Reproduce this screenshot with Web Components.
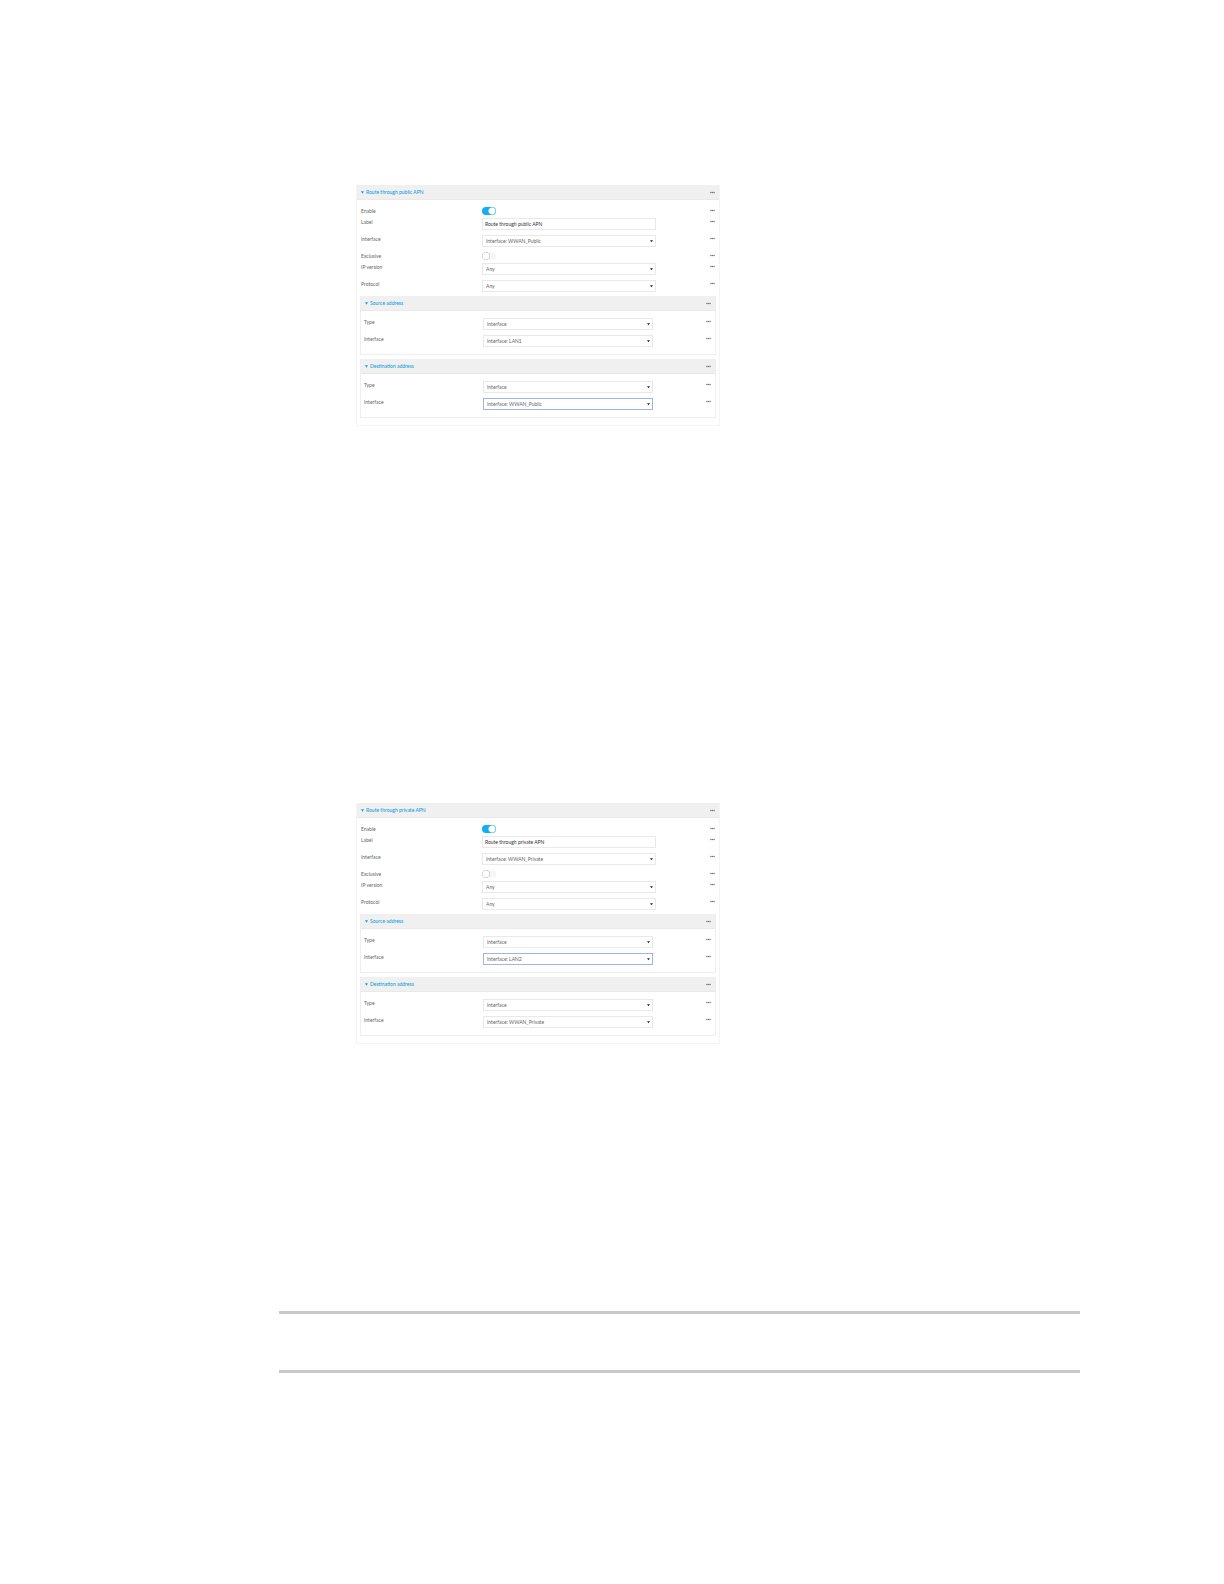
<!DOCTYPE html>
<html lang="en">
<head>
<meta charset="utf-8">
<title>Policy routes</title>
<style>
  body {
    margin: 0;
    background: #fff;
    color: #666;
    font-family: Lato, "Open Sans", sans-serif;
    font-size: 5px;
    line-height: 8px;
  }
</style>
</head>
<body>
<doc-page>
  <route-panel heading="Route through public APN">
    <field-row kind="toggle" label="Enable" checked></field-row>
    <field-row kind="text" label="Label" value="Route through public APN"></field-row>
    <field-row kind="select" label="Interface" value="Interface: WWAN_Public"></field-row>
    <field-row kind="toggle" label="Exclusive"></field-row>
    <field-row kind="select" label="IP version" value="Any"></field-row>
    <field-row kind="select" label="Protocol" value="Any"></field-row>
    <address-section heading="Source address">
      <field-row kind="select" label="Type" value="Interface"></field-row>
      <field-row kind="select" label="Interface" value="Interface: LAN1"></field-row>
    </address-section>
    <address-section heading="Destination address">
      <field-row kind="select" label="Type" value="Interface"></field-row>
      <field-row kind="select" label="Interface" value="Interface: WWAN_Public" active></field-row>
    </address-section>
  </route-panel>

  <route-panel heading="Route through private APN">
    <field-row kind="toggle" label="Enable" checked></field-row>
    <field-row kind="text" label="Label" value="Route through private APN"></field-row>
    <field-row kind="select" label="Interface" value="Interface: WWAN_Private"></field-row>
    <field-row kind="toggle" label="Exclusive"></field-row>
    <field-row kind="select" label="IP version" value="Any"></field-row>
    <field-row kind="select" label="Protocol" value="Any"></field-row>
    <address-section heading="Source address">
      <field-row kind="select" label="Type" value="Interface"></field-row>
      <field-row kind="select" label="Interface" value="Interface: LAN2" active></field-row>
    </address-section>
    <address-section heading="Destination address">
      <field-row kind="select" label="Type" value="Interface"></field-row>
      <field-row kind="select" label="Interface" value="Interface: WWAN_Private"></field-row>
    </address-section>
  </route-panel>

  <doc-note slot="note"></doc-note>
</doc-page>

<script>
class DocPage extends HTMLElement {
  constructor() {
    super();
    this.attachShadow({ mode: 'open' });
    this.shadowRoot.innerHTML = `
      <style>
        :host {
          display: block;
          padding: 185px 144px 211px 279px;
        }

        .panels {
          display: flex;
          flex-direction: column;
          gap: 377px;
          max-width: 364px;
          margin-left: 77px;
        }

        .note {
          margin-top: 267px;
        }
      </style>
      <main>
        <div class="panels"><slot></slot></div>
        <div class="note"><slot name="note"></slot></div>
      </main>
    `;
  }
}

// Empty note area between two rules
class DocNote extends HTMLElement {
  constructor() {
    super();
    this.attachShadow({ mode: 'open' });
    this.shadowRoot.innerHTML = `
      <style>
        :host {
          display: block;
          min-height: 56px;
          border-top: 3px solid #c8c8c8;
          border-bottom: 3px solid #c8c8c8;
        }
      </style>
      <slot></slot>
    `;
  }
}

class MoreButton extends HTMLElement {
  constructor() {
    super();
    this.attachShadow({ mode: 'open' });
    this.shadowRoot.innerHTML = `
      <style>
        :host {
          display: block;
        }

        button {
          display: block;
          padding: 0;
          border: 0;
          background: none;
          cursor: pointer;
        }

        svg {
          display: block;
          width: 5px;
          height: 7px;
          fill: #777;
        }
      </style>
      <button type="button" aria-label="More options">
        <svg viewBox="0 0 5 7" aria-hidden="true">
          <circle cx="0.9" cy="3.5" r="0.8"/>
          <circle cx="2.5" cy="3.5" r="0.8"/>
          <circle cx="4.1" cy="3.5" r="0.8"/>
        </svg>
      </button>
    `;
  }
}

const headerStyle = `
  header {
    display: flex;
    align-items: center;
    justify-content: space-between;
    box-sizing: border-box;
    height: 15px;
    padding: 0 4px;
    background: #f0f0f0;
    border-bottom: 1px solid #e9e9e9;
  }

  h2 {
    margin: 0;
    font: inherit;
  }

  .fold {
    display: flex;
    align-items: center;
    gap: 2px;
    padding: 0;
    border: 0;
    background: none;
    color: #12a0e0;
    font: inherit;
    font-weight: 500;
    line-height: 9px;
    cursor: pointer;
  }

  .fold svg {
    width: 3px;
    height: 3px;
    fill: currentColor;
  }
`;

function headerMarkup(heading) {
  return `
    <header>
      <h2>
        <button type="button" class="fold" aria-expanded="true">
          <svg viewBox="0 0 3 3" aria-hidden="true"><path d="M0 0.3h3L1.5 2.8z"/></svg>
          <span>${heading}</span>
        </button>
      </h2>
      <more-button></more-button>
    </header>
  `;
}

class RoutePanel extends HTMLElement {
  connectedCallback() {
    if (this.shadowRoot) return;
    this.attachShadow({ mode: 'open' });
    this.shadowRoot.innerHTML = `
      <style>
        :host {
          display: block;
          border: 1px solid #f4f4f4;
          border-top: 0;
          --label-width: 121px;
          --more-width: 59px;
        }

        ${headerStyle}

        .body {
          padding: 7px 3px 3px;
        }

        ::slotted(field-row) {
          margin-left: 1px;
          margin-right: 1px;
        }
      </style>
      ${headerMarkup(this.getAttribute('heading'))}
      <div class="body"><slot></slot></div>
    `;
  }
}

class AddressSection extends HTMLElement {
  connectedCallback() {
    if (this.shadowRoot) return;
    this.attachShadow({ mode: 'open' });
    this.shadowRoot.innerHTML = `
      <style>
        :host {
          display: block;
          margin-bottom: 4px;
          border: 1px solid #eee;
          border-top: 0;
          --label-width: 119px;
          --more-width: 58px;
        }

        ${headerStyle}

        .body {
          padding: 7px 4px 3px 3px;
        }
      </style>
      ${headerMarkup(this.getAttribute('heading'))}
      <div class="body"><slot></slot></div>
    `;
  }
}

class FieldRow extends HTMLElement {
  connectedCallback() {
    if (this.shadowRoot) return;
    this.attachShadow({ mode: 'open' });
    this.shadowRoot.innerHTML = `
      <style>
        :host {
          display: grid;
          grid-template-columns: var(--label-width) minmax(0, 1fr) var(--more-width);
          align-items: start;
          height: 12px;
          margin-bottom: 5px;
        }

        :host([kind="toggle"]) {
          height: 8px;
          margin-bottom: 3px;
        }

        :host(:last-of-type) {
          margin-bottom: 4px;
        }

        more-button {
          justify-self: end;
        }

        .control {
          position: relative;
        }

        input[type="text"],
        select {
          display: block;
          appearance: none;
          box-sizing: border-box;
          width: 100%;
          height: 12px;
          margin: 0;
          padding: 0 3px;
          border: 1px solid #e9e9e9;
          border-radius: 0;
          outline: 0;
          background: #fff;
          color: #333;
          font: inherit;
        }

        input[type="text"] {
          padding: 0 2px;
        }

        select {
          color: #666;
        }

        :host([active]) select {
          border-color: #9db8e0;
        }

        .arrow {
          position: absolute;
          right: 3px;
          top: 5px;
          width: 3px;
          height: 3px;
          fill: #222;
          pointer-events: none;
        }

        input[type="checkbox"] {
          display: block;
          appearance: none;
          width: 14px;
          height: 8px;
          margin: 0;
          border-radius: 4px;
          background: radial-gradient(circle at 4px 4px, #fff 3px, #bbb 4px, transparent 4px) #f6f6f6;
        }

        input[type="checkbox"]:checked {
          background: radial-gradient(circle at 10px 4px, #fff 3px, transparent 4px) #12aef5;
        }
      </style>
      <label for="control">${this.getAttribute('label')}</label>
      <div class="control">${this.renderControl()}</div>
      <more-button></more-button>
    `;
  }

  renderControl() {
    const value = this.getAttribute('value');

    switch (this.getAttribute('kind')) {
      case 'toggle':
        return `<input type="checkbox" id="control" ${this.hasAttribute('checked') ? 'checked' : ''}>`;
      case 'text':
        return `<input type="text" id="control" value="${value}">`;
      default:
        return `
          <select id="control"><option>${value}</option></select>
          <svg class="arrow" viewBox="0 0 3 3" aria-hidden="true"><path d="M0 0.3h3L1.5 2.2z"/></svg>
        `;
    }
  }
}

customElements.define('doc-page', DocPage);
customElements.define('doc-note', DocNote);
customElements.define('more-button', MoreButton);
customElements.define('route-panel', RoutePanel);
customElements.define('address-section', AddressSection);
customElements.define('field-row', FieldRow);
</script>
</body>
</html>
